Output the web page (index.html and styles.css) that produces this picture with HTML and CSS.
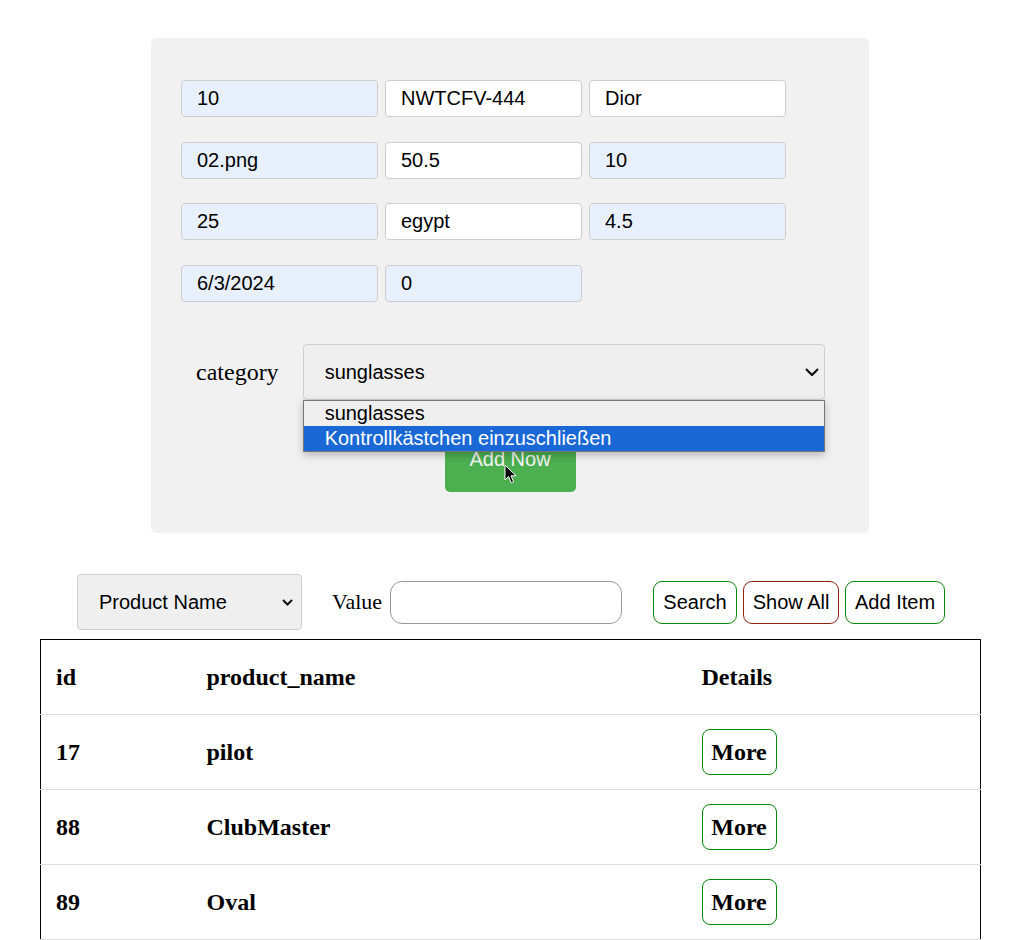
FILE: index.html
```html
<!DOCTYPE html>
<html lang="en">
<head>
<meta charset="utf-8">
<title>Products</title>
<link rel="stylesheet" href="styles.css">
</head>
<body>
<div class="page">
  <form class="add-form">
    <div class="fields">
      <input class="field filled" type="text" value="10">
      <input class="field" type="text" value="NWTCFV-444">
      <input class="field" type="text" value="Dior">
      <input class="field filled" type="text" value="02.png">
      <input class="field" type="text" value="50.5">
      <input class="field filled" type="text" value="10">
      <input class="field filled" type="text" value="25">
      <input class="field" type="text" value="egypt">
      <input class="field filled" type="text" value="4.5">
      <input class="field filled" type="text" value="6/3/2024">
      <input class="field filled" type="text" value="0">
    </div>
    <div class="category-row">
      <label class="cat-label">category</label>
      <div class="select-box cat-select">
        <span class="select-text">sunglasses</span>
        <svg class="chev chev-lg" viewBox="0 0 14 8" width="14" height="8"><path d="M1 1 L7 7 L13 1" fill="none" stroke="#111" stroke-width="2.2"/></svg>
        <ul class="popup">
          <li class="opt">sunglasses</li>
          <li class="opt active">Kontrollkästchen einzuschließen</li>
        </ul>
      </div>
    </div>
    <div class="actions">
      <span class="btn-wrap">
        <button type="button" class="add-now">Add Now</button>
        <svg class="cursor" viewBox="0 0 13 21" width="13" height="21"><path d="M1 1 L1 16 L4.6 12.6 L7.2 18.8 L9.6 17.8 L7 11.8 L12 11.8 Z" fill="#000" stroke="#fff" stroke-width="1"/></svg>
      </span>
    </div>
  </form>

  <div class="search-bar">
    <div class="select-box search-select">
      <span class="select-text">Product Name</span>
      <svg class="chev chev-sm" viewBox="0 0 11 7" width="11" height="7"><path d="M1 1 L5.5 5.5 L10 1" fill="none" stroke="#111" stroke-width="2"/></svg>
    </div>
    <label class="value-label">Value</label>
    <input class="value-input" type="text">
    <div class="btn-group">
      <button type="button" class="tool-btn green w-search">Search</button>
      <button type="button" class="tool-btn red w-show">Show All</button>
      <button type="button" class="tool-btn green w-add">Add Item</button>
    </div>
  </div>

  <table class="products">
    <colgroup>
      <col class="c-id">
      <col class="c-name">
      <col class="c-det">
    </colgroup>
    <thead>
      <tr><th>id</th><th>product_name</th><th>Details</th></tr>
    </thead>
    <tbody>
      <tr><td>17</td><td>pilot</td><td><button type="button" class="more">More</button></td></tr>
      <tr><td>88</td><td>ClubMaster</td><td><button type="button" class="more">More</button></td></tr>
      <tr><td>89</td><td>Oval</td><td><button type="button" class="more">More</button></td></tr>
    </tbody>
  </table>
</div>
</body>
</html>
```

FILE: styles.css
```css
* { box-sizing: border-box; }

html, body {
  margin: 0;
  padding: 0;
  background: #fff;
}

body {
  font-family: "Liberation Serif", "Times New Roman", serif;
  color: #000;
}

.page {
  padding-top: 38px;
}

/* ---------- add form ---------- */
.add-form {
  width: 718px;
  margin: 0 0 0 151px;
  padding: 42px 30px 41px;
  background: #f1f1f1;
  border-radius: 5px;
}

.fields {
  display: grid;
  grid-template-columns: repeat(3, 197px);
  column-gap: 7px;
  row-gap: 24.7px;
}

.field {
  width: 197px;
  height: 37px;
  margin: 0;
  padding: 0 15px;
  border: 1px solid #cdcdcd;
  border-radius: 4px;
  background: #fff;
  font-family: "Liberation Sans", Arial, sans-serif;
  font-size: 20px;
  color: #000;
  outline: none;
}

.field.filled {
  background: #e8f0fe;
}

.category-row {
  display: flex;
  align-items: center;
  gap: 24px;
  margin-top: 42px;
  padding-left: 15px;
}

.cat-label {
  font-size: 24px;
}

.select-box {
  position: relative;
  display: flex;
  align-items: center;
  background: #efefef;
  border: 1px solid #cfcfcf;
  border-radius: 4px;
  font-family: "Liberation Sans", Arial, sans-serif;
  font-size: 20px;
  color: #000;
}

.cat-select {
  width: 522px;
  height: 56px;
  padding-left: 21px;
}

.select-text {
  flex: 1;
}

.chev-lg {
  margin-right: 5px;
}

.popup {
  position: absolute;
  top: calc(100% + 1px);
  left: -1px;
  width: calc(100% + 2px);
  margin: 0;
  padding: 0;
  list-style: none;
  background: #efefef;
  border: 1px solid #767676;
  box-shadow: 0 3px 8px rgba(0, 0, 0, 0.25);
  z-index: 5;
}

.opt {
  height: 25px;
  line-height: 24px;
  padding-left: 21px;
  font-size: 20px;
}

.opt.active {
  background: #1a68d6;
  color: #fff;
}

.actions {
  display: flex;
  justify-content: center;
  margin-top: 24px;
}

.btn-wrap {
  position: relative;
  display: inline-block;
}

.add-now {
  display: block;
  width: 131px;
  height: 68px;
  padding: 2px 0 0;
  border: none;
  border-radius: 5px;
  background: #4caf50;
  color: #f4f4f4;
  font-family: "Liberation Sans", Arial, sans-serif;
  font-size: 20px;
}

.cursor {
  position: absolute;
  left: 59px;
  top: 40px;
  z-index: 6;
}

/* ---------- search bar ---------- */
.search-bar {
  display: flex;
  justify-content: center;
  align-items: center;
  height: 56px;
  margin-top: 41px;
}

.search-select {
  width: 225px;
  height: 56px;
  padding-left: 21px;
}

.chev-sm {
  margin-right: 8px;
}

.value-label {
  margin-left: 30px;
  font-size: 22px;
}

.value-input {
  width: 232px;
  height: 43px;
  margin: 0 0 0 8px;
  padding: 0 10px;
  border: 1px solid #999;
  border-radius: 12px;
  background: #fff;
  font-family: "Liberation Sans", Arial, sans-serif;
  font-size: 20px;
  outline: none;
}

.btn-group {
  display: flex;
  gap: 6px;
  margin-left: 31px;
}

.tool-btn {
  height: 43px;
  padding: 0;
  background: #fff;
  border: 1px solid #0a8a0a;
  border-radius: 9px;
  font-family: "Liberation Sans", Arial, sans-serif;
  font-size: 20px;
  color: #000;
}

.tool-btn.red {
  border-color: #8e2410;
}

.w-search { width: 84px; }
.w-show { width: 96px; }
.w-add { width: 100px; }

/* ---------- table ---------- */
.products {
  width: 941px;
  margin: 9px 40px 0;
  border-collapse: collapse;
  border: 1px solid #000;
  border-bottom: none;
  font-size: 24px;
  font-weight: bold;
}

.c-id { width: 151px; }
.c-name { width: 495px; }

.products th,
.products td {
  height: 75px;
  padding: 0 15px;
  text-align: left;
  vertical-align: middle;
  border-bottom: 1px solid #dddddd;
  font-weight: bold;
}

.more {
  width: 75px;
  height: 46px;
  padding: 0;
  background: #fff;
  border: 1px solid #0a8a0a;
  border-radius: 8px;
  font-family: "Liberation Serif", "Times New Roman", serif;
  font-size: 24px;
  font-weight: bold;
  color: #000;
}
```
